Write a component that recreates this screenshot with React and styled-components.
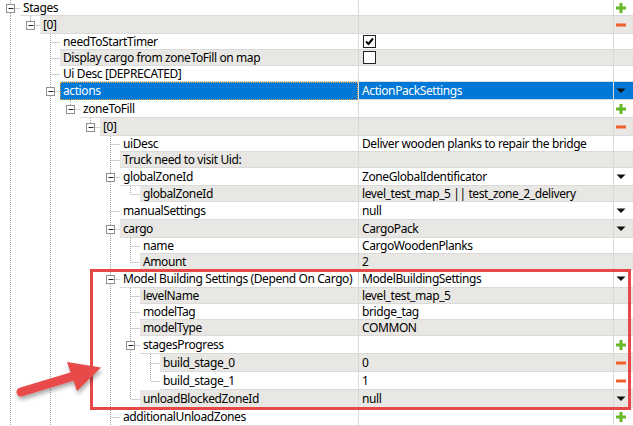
import React from "react";
import styled, { createGlobalStyle, css } from "styled-components";

const GlobalStyle = createGlobalStyle`
  html, body {
    margin: 0;
    padding: 0;
    background: #fff;
    overflow: hidden;
  }
  body {
    font-family: "Segoe UI", "Noto Sans", sans-serif;
    font-size: 12px;
    letter-spacing: -0.4px;
    color: #000;
  }
`;

const rows = [
  { level: 0, label: "Stages", h: 16, open: true, icon: "plus" },
  { level: 1, label: "[0]", h: 18, open: true, icon: "minus" },
  { level: 2, label: "needToStartTimer", h: 16, check: true },
  { level: 2, label: "Display cargo from zoneToFill on map", h: 16, check: false },
  { level: 2, label: "Ui Desc [DEPRECATED]", h: 16 },
  { level: 2, label: "actions", h: 18, open: true, value: "ActionPackSettings", icon: "drop", selected: true },
  { level: 3, label: "zoneToFill", h: 18, open: true, icon: "plus" },
  { level: 4, label: "[0]", h: 18, open: true, icon: "minus" },
  { level: 5, label: "uiDesc", h: 16, value: "Deliver wooden planks to repair the bridge" },
  { level: 5, label: "Truck need to visit Uid:", h: 16 },
  { level: 5, label: "globalZoneId", h: 18, open: true, value: "ZoneGlobalIdentificator", icon: "drop" },
  { level: 6, label: "globalZoneId", h: 16, value: "level_test_map_5 || test_zone_2_delivery" },
  { level: 5, label: "manualSettings", h: 18, value: "null", icon: "drop" },
  { level: 5, label: "cargo", h: 18, open: true, value: "CargoPack", icon: "drop" },
  { level: 6, label: "name", h: 16, value: "CargoWoodenPlanks" },
  { level: 6, label: "Amount", h: 16, value: "2" },
  { level: 5, label: "Model Building Settings (Depend On Cargo)", h: 18, open: true, value: "ModelBuildingSettings", icon: "drop" },
  { level: 6, label: "levelName", h: 16, value: "level_test_map_5" },
  { level: 6, label: "modelTag", h: 16, value: "bridge_tag" },
  { level: 6, label: "modelType", h: 16, value: "COMMON" },
  { level: 6, label: "stagesProgress", h: 18, open: true, icon: "plus" },
  { level: 7, label: "build_stage_0", h: 18, value: "0", icon: "minus" },
  { level: 7, label: "build_stage_1", h: 18, value: "1", icon: "minus" },
  { level: 6, label: "unloadBlockedZoneId", h: 18, value: "null", icon: "drop" },
  { level: 5, label: "additionalUnloadZones", h: 18, icon: "plus" },
];

// rows that continue below the visible area
const levels = rows.map((r) => r.level).concat([5, 2, 0]);

const hasLaterSibling = (i, k) => {
  for (let j = i + 1; j < levels.length; j++) {
    if (levels[j] < k) return false;
    if (levels[j] === k) return true;
  }
  return false;
};

const Page = styled.div`
  position: relative;
  width: 633px;
  height: 426px;
  overflow: hidden;
`;

const Row = styled.div`
  display: flex;
  height: ${(p) => p.$h}px;
`;

const TreePart = styled.div`
  display: flex;
  width: 358px;
  flex: none;
`;

const Gutter = styled.svg`
  display: block;
  flex: none;
`;

const cellBg = (p) =>
  p.$selected ? "#0078d7" : p.$shade ? "#e8e7e4" : "#ffffff";

const Label = styled.div`
  flex: 1;
  min-width: 0;
  box-sizing: border-box;
  display: flex;
  align-items: center;
  padding: 1px 0 0 3px;
  line-height: 14px;
  white-space: nowrap;
  background: ${cellBg};
  color: ${(p) => (p.$selected ? "#fff" : "#000")};
  border-bottom: 1px solid #dadada;
  ${(p) =>
    p.$selected &&
    css`
      border: 1px dotted #f0a040;
      padding: 0 0 0 2px;
    `}
`;

const Value = styled.div`
  width: 255px;
  flex: none;
  box-sizing: border-box;
  display: flex;
  align-items: center;
  padding: 1px 0 0 3px;
  line-height: 14px;
  white-space: nowrap;
  background: ${cellBg};
  color: ${(p) => (p.$selected ? "#fff" : "#000")};
  border-left: 1px solid #d9d9d9;
  border-bottom: 1px solid #dadada;
`;

const IconCell = styled.div`
  width: 20px;
  flex: none;
  box-sizing: border-box;
  display: flex;
  align-items: center;
  padding-left: 2px;
  background: ${cellBg};
  border-left: 1px solid #d9d9d9;
  border-bottom: 1px solid #dadada;
`;

const CheckBox = styled.div`
  width: 13px;
  height: 13px;
  box-sizing: border-box;
  border: 1px solid #222;
  background: #fff;
  margin: -1px 0 0 1px;
  display: flex;
  align-items: center;
  justify-content: center;
`;

const Highlight = styled.div`
  position: absolute;
  left: 90px;
  top: 269px;
  width: 541px;
  height: 141px;
  box-sizing: border-box;
  border: 3px solid #e64848;
  pointer-events: none;
`;

const Arrow = styled.svg`
  position: absolute;
  left: 0;
  top: 340px;
  overflow: visible;
  pointer-events: none;
`;

const DOT = "#a3a3a3";

function TreeLines({ index, level, h, open }) {
  const w = 20 + 20 * level;
  const mid = Math.floor(h / 2) + 0.5;
  const cx = 10 + 20 * level + 0.5;
  const down = hasLaterSibling(index, level);
  const parts = [];

  for (let k = 0; k < level; k++) {
    if (hasLaterSibling(index, k)) {
      const x = 10 + 20 * k + 0.5;
      parts.push(<line key={"a" + k} x1={x} y1={0} x2={x} y2={h} />);
    }
  }

  if (open) {
    parts.push(<line key="up" x1={cx} y1={0} x2={cx} y2={mid - 4.5} />);
    if (down) parts.push(<line key="dn" x1={cx} y1={mid + 4.5} x2={cx} y2={h} />);
    parts.push(<line key="hz" x1={cx + 5} y1={mid} x2={w} y2={mid} />);
  } else {
    parts.push(<line key="up" x1={cx} y1={0} x2={cx} y2={down ? h : mid} />);
    parts.push(<line key="hz" x1={cx + 1} y1={mid} x2={w} y2={mid} />);
  }

  return (
    <Gutter width={w} height={h}>
      <g stroke={DOT} strokeWidth="1" strokeDasharray="1 1">
        {parts}
      </g>
      {open && (
        <g>
          <rect x={cx - 4} y={mid - 4} width="8" height="8" fill="#fff" stroke="#919191" />
          <line x1={cx - 2} y1={mid} x2={cx + 3} y2={mid} stroke="#222" />
        </g>
      )}
    </Gutter>
  );
}

function RowIcon({ kind }) {
  if (kind === "plus")
    return (
      <svg width="10" height="10" viewBox="0 0 10 10">
        <rect x="3.5" y="0" width="3" height="10" fill="#66b824" />
        <rect x="0" y="3.5" width="10" height="3" fill="#66b824" />
      </svg>
    );
  if (kind === "minus")
    return (
      <svg width="10" height="4" viewBox="0 0 10 4">
        <rect x="0" y="0.5" width="10" height="3" fill="#f0602a" />
      </svg>
    );
  if (kind === "drop")
    return (
      <svg width="10" height="6" viewBox="0 0 10 6">
        <path d="M0.5 0.5 H9.5 L5 5 Z" fill="#111" />
      </svg>
    );
  return null;
}

function Check({ on }) {
  return (
    <CheckBox>
      {on && (
        <svg width="11" height="11" viewBox="0 0 11 11">
          <path d="M2 5.5 L4.5 8 L9 2.5" fill="none" stroke="#000" strokeWidth="2" />
        </svg>
      )}
    </CheckBox>
  );
}

export default function App() {
  return (
    <Page>
      <GlobalStyle />
      {rows.map((r, i) => {
        const shade = i % 2 === 1;
        return (
          <Row key={i} $h={r.h}>
            <TreePart>
              <TreeLines index={i} level={r.level} h={r.h} open={r.open} />
              <Label $shade={shade} $selected={r.selected}>
                {r.label}
              </Label>
            </TreePart>
            <Value $shade={shade} $selected={r.selected}>
              {r.check !== undefined ? <Check on={r.check} /> : r.value}
            </Value>
            <IconCell $shade={shade} $selected={r.selected}>
              {r.icon && <RowIcon kind={r.icon} />}
            </IconCell>
          </Row>
        );
      })}

      <Highlight />
      <Arrow width="110" height="70">
        <defs>
          <filter id="shadow" x="-20%" y="-20%" width="150%" height="160%">
            <feDropShadow dx="1" dy="3" stdDeviation="2" floodColor="#000" floodOpacity="0.35" />
          </filter>
        </defs>
        <g filter="url(#shadow)" fill="#e84a48" stroke="#e84a48">
          <line x1="21" y1="52" x2="74" y2="36" strokeWidth="9" strokeLinecap="round" />
          <path d="M67 22 L101 27.5 L77 51 Z" stroke="none" />
        </g>
      </Arrow>
    </Page>
  );
}
